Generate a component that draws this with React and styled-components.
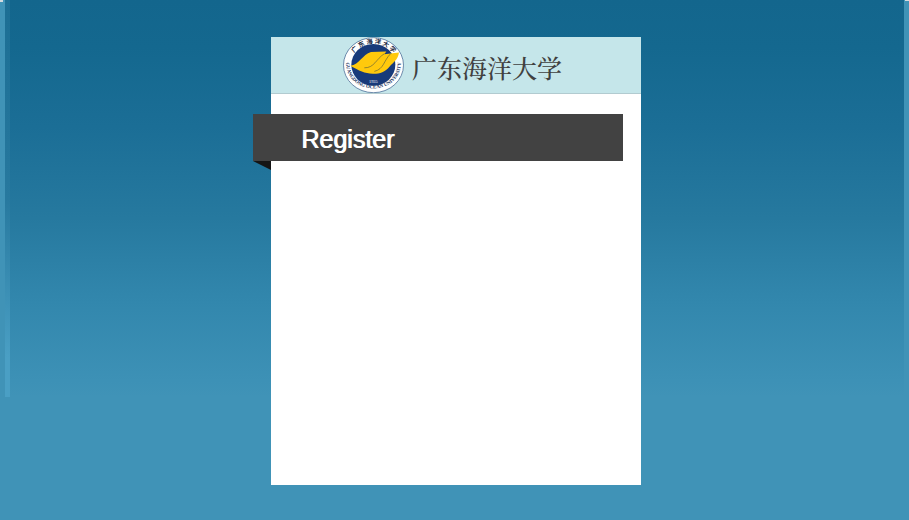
import React from "react";
import styled, { createGlobalStyle } from "styled-components";

const GlobalStyle = createGlobalStyle`
  *, *::before, *::after { box-sizing: border-box; }
  body {
    margin: 0;
    background: #4093b7;
    font-family: "Liberation Sans", Arial, sans-serif;
  }
`;

const Page = styled.div`
  min-height: 100vh;
  padding: 37px 8px 35px 11px;
  background:
    linear-gradient(#d5dce0, #d5dce0) 0 0 / 3px 2px no-repeat,
    linear-gradient(#d5dce0, #d5dce0) 100% 0 / 4px 1px no-repeat,
    linear-gradient(#4093b7, #4093b7) 0 0 / 5px 100% no-repeat,
    linear-gradient(#4093b7, #4093b7) 100% 0 / 5px 100% no-repeat,
    linear-gradient(#1c6e94, #27799f 50%, #4a9fc4 90%, #4a9fc4) 5px 0 / 5px 397px no-repeat,
    linear-gradient(#13668d, #14688f 12%, #1b6e96 32%, #26799f 55%, #3287ad 76%, #3d91b6 96%, #4093b7) 0 0 / 100% 397px no-repeat,
    #4093b7;
`;

const Card = styled.main`
  width: 100%;
  max-width: 370px;
  min-height: 448px;
  margin: 0 auto;
  background: #fff;
`;

const Brand = styled.header`
  display: flex;
  align-items: center;
  gap: 8px;
  height: 57px;
  padding-left: 72px;
  background: #c5e6ea;
  border-bottom: 1px solid #b2cbd0;
`;

const Seal = styled.svg`
  flex: none;
  width: 61px;
  height: 56px;
`;

const BrandName = styled.span`
  color: #404040;
  font-family: "Noto Serif CJK SC", "Noto Sans CJK SC", serif;
  font-size: 25px;
  font-weight: 500;
  line-height: 36px;
  white-space: nowrap;
  padding-top: 4px;
`;

const Ribbon = styled.div`
  position: relative;
  display: flex;
  align-items: center;
  height: 47px;
  margin: 20px 18px 0 -18px;
  padding-left: 48px;
  background: #424242;

  &::after {
    content: "";
    position: absolute;
    top: 100%;
    left: 0;
    width: 18px;
    height: 9px;
    background: #151515;
    clip-path: polygon(0 0, 100% 0, 100% 100%);
  }
`;

const Title = styled.h1`
  margin: 0;
  padding-top: 2px;
  color: #fff;
  font-size: 25px;
  font-weight: 400;
  line-height: 28px;
  text-shadow: 1px 0 0 #fff;
`;

function UniversitySeal() {
  return (
    <Seal viewBox="0 0 183 171" preserveAspectRatio="none" role="img" aria-label="Guangdong Ocean University">
      <defs>
        <path id="seal-top" d="M22 86A70 66 0 0 1 162 86" />
        <path id="seal-bottom" d="M9 76C8 184 175 184 174 76" />
      </defs>
      <ellipse cx="91.5" cy="86" rx="90" ry="84" fill="#fff" stroke="#315586" strokeWidth="2" />
      <ellipse cx="91" cy="85" rx="66" ry="64" fill="#183a7a" />
      <path d="M22 88C50 84 58 54 84 46L130 44L124 53L168 47C165 70 150 77 140 90C126 108 111 112 93 112C67 113 50 104 22 88Z" fill="#ffc90c" />
      <path d="M64 94C94 95 99 67 124 51M94 105C123 98 122 72 142 52" fill="none" stroke="#60613d" strokeWidth="2" />
      <text fill="#17263e" fontFamily="Noto Sans CJK SC, sans-serif" fontSize="19" fontWeight="700">
        <textPath href="#seal-top" startOffset="50%" textAnchor="middle">广 东 海 洋 大 学</textPath>
      </text>
      <text fill="#17315c" fontFamily="Liberation Serif, serif" fontSize="15" fontWeight="700">
        <textPath href="#seal-bottom" startOffset="50%" textAnchor="middle">GUANGDONG OCEAN UNIVERSITY</textPath>
      </text>
      <text x="91" y="141" fill="#fff" fontFamily="Liberation Serif, serif" fontSize="13" textAnchor="middle">1935</text>
    </Seal>
  );
}

export default function App() {
  return (
    <>
      <GlobalStyle />
      <Page>
        <Card>
          <Brand>
            <UniversitySeal />
            <BrandName lang="zh-CN">广东海洋大学</BrandName>
          </Brand>
          <Ribbon>
            <Title>Register</Title>
          </Ribbon>
        </Card>
      </Page>
    </>
  );
}
